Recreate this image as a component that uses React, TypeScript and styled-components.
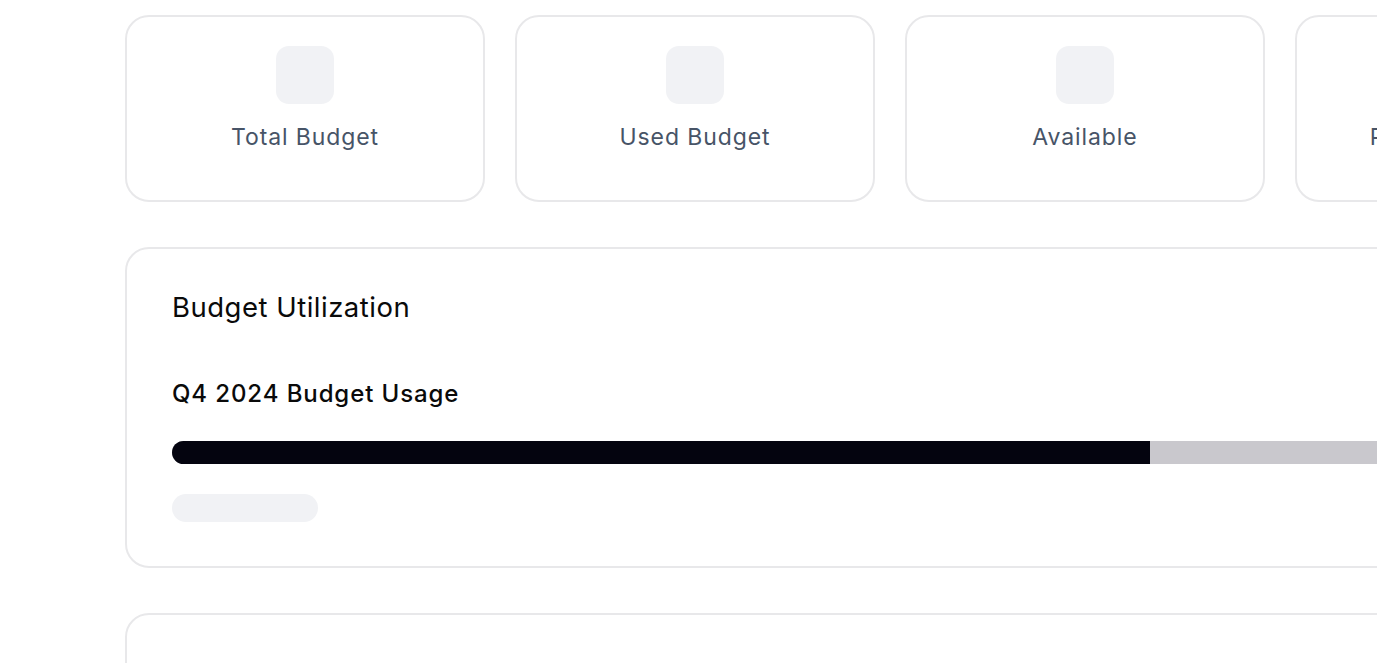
import React from "react";
import styled, { createGlobalStyle } from "styled-components";

const GlobalStyle = createGlobalStyle`
    html, body {
        margin: 0;
        padding: 0;
        background: #ffffff;
        overflow: hidden;
    }
    body {
        font-family: Inter, "Noto Sans", "Liberation Sans", sans-serif;
        color: #0a0a0a;
    }
`;

const Page = styled.main`
    padding: 15px 0 0 125px;
    width: 1532px;
    display: flex;
    flex-direction: column;
    gap: 45px;
`;

const StatsRow = styled.div`
    display: grid;
    grid-template-columns: repeat(4, 360px);
    gap: 30px;
`;

const StatCard = styled.div`
    height: 187px;
    box-sizing: border-box;
    border: 2px solid #e8e8ea;
    border-radius: 24px;
    padding: 29px 20px 0;
    display: flex;
    flex-direction: column;
    align-items: center;
    gap: 18px;
`;

const IconPlaceholder = styled.div`
    width: 58px;
    height: 58px;
    border-radius: 13px;
    background: #f1f2f5;
`;

const StatLabel = styled.span`
    font-size: 23px;
    line-height: 30px;
    letter-spacing: 0.9px;
    white-space: nowrap;
    color: #475467;
`;

const Panel = styled.section`
    box-sizing: border-box;
    border: 2px solid #e8e8ea;
    border-radius: 24px;
    padding: 40px 45px 44px;
    display: flex;
    flex-direction: column;
`;

const PanelTitle = styled.h2`
    margin: 0;
    font-size: 27.5px;
    line-height: 36px;
    font-weight: 400;
    letter-spacing: 0.5px;
    color: #0a0a0a;
`;

const UsageLabel = styled.h3`
    margin: 53px 0 0;
    font-size: 24px;
    line-height: 32px;
    font-weight: 500;
    letter-spacing: 0.9px;
    color: #0a0a0a;
`;

const Track = styled.div`
    margin-top: 31px;
    height: 23px;
    border-radius: 999px;
    background: #c9c8cd;
    overflow: hidden;
`;

const Fill = styled.div`
    height: 100%;
    background: #04040f;
`;

const Skeleton = styled.div<{ $width: number }>`
    margin-top: 30px;
    width: ${(p) => p.$width}px;
    height: 28px;
    border-radius: 14px;
    background: #f1f2f5;
`;

const stats = ["Total Budget", "Used Budget", "Available", "Pending Requests"];

export default function App() {
    const usedPercent = 68;
    return (
        <>
            <GlobalStyle />
            <Page>
                <StatsRow>
                    {stats.map((label) => (
                        <StatCard key={label}>
                            <IconPlaceholder />
                            <StatLabel>{label}</StatLabel>
                        </StatCard>
                    ))}
                </StatsRow>
                <Panel>
                    <PanelTitle>Budget Utilization</PanelTitle>
                    <UsageLabel>Q4 2024 Budget Usage</UsageLabel>
                    <Track>
                        <Fill style={{ width: `${usedPercent}%` }} />
                    </Track>
                    <Skeleton $width={146} />
                </Panel>
                <Panel>
                    <PanelTitle>Recent MDF Requests</PanelTitle>
                    <Skeleton $width={420} />
                    <Skeleton $width={300} />
                </Panel>
            </Page>
        </>
    );
}
